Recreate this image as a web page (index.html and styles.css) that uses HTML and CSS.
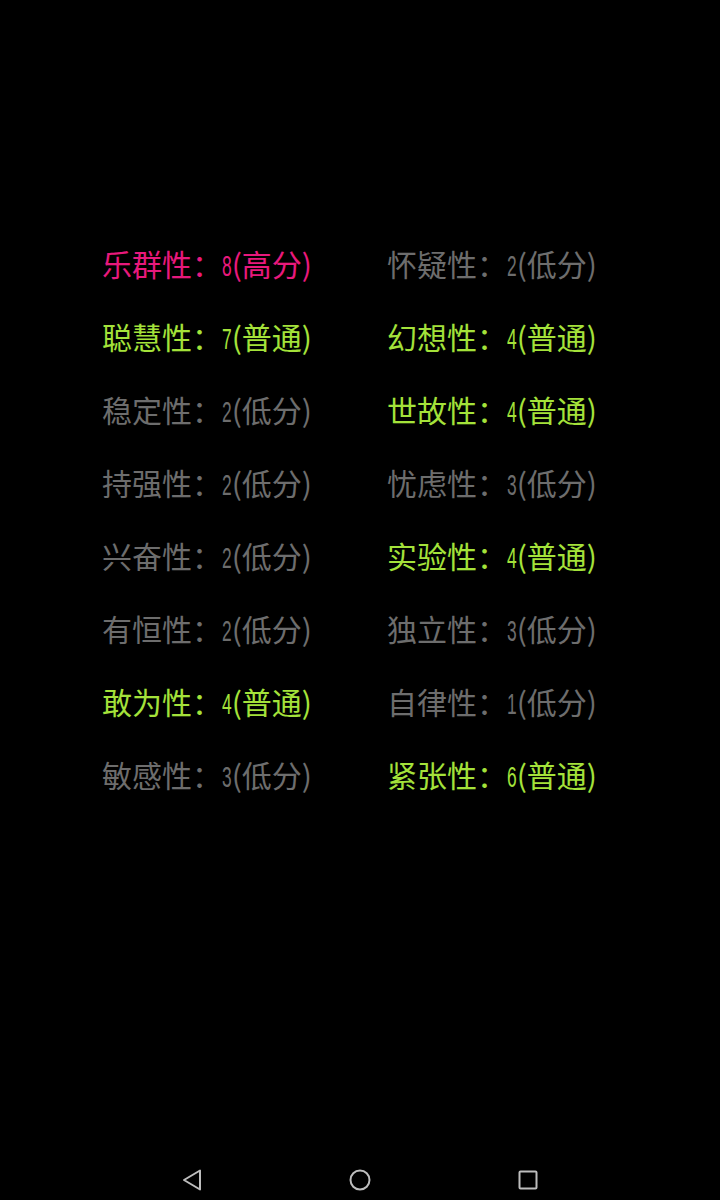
FILE: index.html
```html
<!DOCTYPE html>
<html lang="zh-CN">
<head>
<meta charset="utf-8">
<link rel="stylesheet" href="styles.css">
</head>
<body>
<div class="screen">
  <div class="grid">
    <div class="item pink">乐群性：<span class="d">8</span>(高分)</div>
    <div class="item gray">怀疑性：<span class="d">2</span>(低分)</div>
    <div class="item green">聪慧性：<span class="d">7</span>(普通)</div>
    <div class="item green">幻想性：<span class="d">4</span>(普通)</div>
    <div class="item gray">稳定性：<span class="d">2</span>(低分)</div>
    <div class="item green">世故性：<span class="d">4</span>(普通)</div>
    <div class="item gray">持强性：<span class="d">2</span>(低分)</div>
    <div class="item gray">忧虑性：<span class="d">3</span>(低分)</div>
    <div class="item gray">兴奋性：<span class="d">2</span>(低分)</div>
    <div class="item green">实验性：<span class="d">4</span>(普通)</div>
    <div class="item gray">有恒性：<span class="d">2</span>(低分)</div>
    <div class="item gray">独立性：<span class="d">3</span>(低分)</div>
    <div class="item green">敢为性：<span class="d">4</span>(普通)</div>
    <div class="item gray">自律性：<span class="d">1</span>(低分)</div>
    <div class="item gray">敏感性：<span class="d">3</span>(低分)</div>
    <div class="item green">紧张性：<span class="d">6</span>(普通)</div>
  </div>
  <div class="navbar">
    <svg class="nav-icon" width="24" height="24" viewBox="0 0 24 24"><path d="M20 2.5 L20 21.5 L4 12 Z" fill="none" stroke="#bdbdbd" stroke-width="2" stroke-linejoin="round"/></svg>
    <svg class="nav-icon" width="24" height="24" viewBox="0 0 24 24"><circle cx="12" cy="12" r="9.5" fill="none" stroke="#bdbdbd" stroke-width="2"/></svg>
    <svg class="nav-icon" width="24" height="24" viewBox="0 0 24 24"><rect x="3.5" y="3.5" width="17" height="17" rx="1" fill="none" stroke="#bdbdbd" stroke-width="2"/></svg>
  </div>
</div>
</body>
</html>
```
FILE: styles.css
```css
html, body {
  margin: 0;
  padding: 0;
  background: #000;
}
.screen {
  width: 720px;
  height: 1200px;
  display: flex;
  flex-direction: column;
  background: #000;
  font-family: "Noto Sans CJK SC", sans-serif;
}
.grid {
  display: grid;
  grid-template-columns: 285px 285px;
  grid-auto-rows: 73px;
  padding: 227px 0 0 102px;
  flex: 1;
  align-content: start;
}
.item {
  font-size: 30px;
  line-height: 73px;
  white-space: nowrap;
  letter-spacing: 0;
}
.d {
  display: inline-block;
  font-family: "Liberation Sans", sans-serif;
  font-size: 29px;
  transform: scaleX(0.6);
  transform-origin: left center;
  margin-right: -6.5px;
}
.pink { color: #e8197c; }
.green { color: #a4e23a; }
.gray { color: #6d6d6d; }
.navbar {
  height: 40px;
  display: flex;
  justify-content: center;
  align-items: center;
  gap: 144px;
}
.nav-icon {
  display: block;
}
```
